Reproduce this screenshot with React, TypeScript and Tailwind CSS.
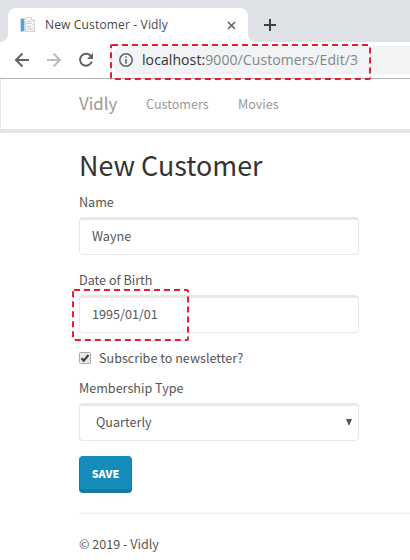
import React from "react";

function DashedFrame({ className, w, h }: { className: string; w: number; h: number }) {
  return (
    <svg className={"absolute pointer-events-none " + className} width={w} height={h}>
      <rect x="1" y="1" width={w - 2} height={h - 2} rx="1" fill="none" stroke="#eb1c2b" strokeWidth="2" strokeDasharray="6 4" />
    </svg>
  );
}

function PageIcon() {
  return (
    <svg width="16" height="16" viewBox="0 0 16 16">
      <path d="M5.5.5h6l3 3v8h-9z" fill="#f6f6f6" stroke="#dcdcdc" />
      <path d="M11.5.5v3h3" fill="#fff" stroke="#cfcfcf" />
      <rect x="0" y="1" width="5" height="14" fill="#c3ddee" />
      <rect x="1" y="2" width="3" height="12" fill="#56a0d3" />
      <path d="M5.500 6.500h6l3 2.500v5.500h-9z" fill="#f5f6f7" stroke="#cfd3d8" />
      <path d="M7 4.500h4M7 9.500h4M7 12h6" stroke="#c3c8cc" />
    </svg>
  );
}

function BrowserBar() {
  return (
    <header>
      <div className="flex h-[42px] bg-[#dee1e6] pt-2">
        <div className="flex w-2 items-end bg-white"><div className="h-full w-2 rounded-br-lg bg-[#dee1e6]" /></div>
        <div className="flex w-[240px] items-center rounded-t-lg bg-white pl-3 pr-3">
          <PageIcon />
          <span className="ml-[9px] flex-1 whitespace-nowrap font-['Open_Sans',sans-serif] text-[12px] leading-4 tracking-[0.16px] text-[#45484c]">New Customer - Vidly</span>
          <svg width="9" height="9" viewBox="0 0 9 9"><path d="M1 1l7 7M8 1l-7 7" stroke="#5f6368" strokeWidth="1.6" /></svg>
        </div>
        <div className="w-2 bg-white"><div className="h-full w-2 rounded-bl-lg bg-[#dee1e6]" /></div>
        <svg className="ml-2 mt-[11px]" width="12" height="12"><path d="M6 0v12M0 6h12" stroke="#3c4043" strokeWidth="2" /></svg>
      </div>
      <div className="flex h-[37px] items-center border-b border-[#b0b1b3] bg-white pl-[14px]">
        <svg width="16" height="16" viewBox="0 0 16 16" fill="none" stroke="#5f6368" strokeWidth="2"><path d="M15 8H2.500M8.500 1.500L2 8l6.500 6.500" /></svg>
        <svg className="ml-4" width="16" height="16" viewBox="0 0 16 16" fill="none" stroke="#babcbe" strokeWidth="2"><path d="M1 8h12.500M7.500 1.500L14 8l-6.500 6.500" /></svg>
        <svg className="ml-4" width="16" height="16" viewBox="0 0 16 16" fill="none"><path d="M13 4.200A6 6 0 1 0 13.800 9.500" stroke="#5f6368" strokeWidth="2" /><path d="M15 1v6H9z" fill="#5f6368" /></svg>
        <div className="ml-[17px] flex h-7 flex-1 items-center rounded-l-full bg-[#f1f3f4] pl-2">
          <svg width="14" height="14" viewBox="0 0 14 14" fill="none" stroke="#5f6368"><circle cx="7" cy="7" r="6.200" strokeWidth="1.500" /><path d="M7 3.300v1.500M7 6v4.700" strokeWidth="1.600" /></svg>
          <span className="ml-[9px] whitespace-nowrap font-['Open_Sans',sans-serif] text-[14px] leading-5 tracking-[0.09px] text-[#80868b]"><span className="text-[#303236]">localhost:</span>9000/Customers/Edit/3</span>
        </div>
      </div>
    </header>
  );
}

function Field({ label, value, className }: { label: string; value: string; className: string }) {
  return (
    <div className={className}>
      <div className="h-5 leading-5">{label}</div>
      <div className="mt-[5px] flex h-[38px] w-[280px] items-center rounded border border-t-[3px] border-[#e7e7e7] pb-0.5 pl-3">{value}</div>
    </div>
  );
}

export default function App() {
  return (
    <div className="relative h-[560px] w-[410px] overflow-hidden bg-white font-['Noto_Sans_CJK_SC',sans-serif] text-[12.6px] text-[#555]">
      <BrowserBar />
      <nav className="flex h-[54px] items-center border-b-4 border-l border-[#e5e5e5] pl-[78px] text-[#999]">
        <span className="w-[67px] text-[16.8px]">Vidly</span>
        <span className="w-[92px]">Customers</span>
        <span>Movies</span>
      </nav>
      <main className="pl-[79px]">
        <h1 className="h-[51px] pt-[14px] text-[26.9px] leading-9 text-[#333]">New Customer</h1>
        <Field className="mt-2" label="Name" value="Wayne" />
        <Field className="mt-[15px]" label="Date of Birth" value="1995/01/01" />
        <div className="mt-[15px] flex h-5 items-center">
          <svg width="12" height="12" viewBox="0 0 12 12"><rect x=".5" y=".5" width="11" height="11" rx="1" fill="#e9e9e9" stroke="#aaa" /><path d="M2.500 6.300l2.300 2.400L9.500 3" fill="none" stroke="#404040" strokeWidth="2.200" /></svg>
          <span className="ml-2">Subscribe to newsletter?</span>
        </div>
        <div className="mt-[10px] h-5 leading-5">Membership Type</div>
        <div className="mt-[5px] flex h-[38px] w-[280px] items-center justify-between rounded border border-t-[3px] border-[#e7e7e7] pb-0.5 pl-4 pr-[6px]">
          <span>Quarterly</span>
          <svg width="6" height="6"><path d="M0 0h6L3.500 6h-1z" fill="#555" /></svg>
        </div>
        <button className="mt-[15px] flex h-[37px] w-[53px] items-center justify-center rounded border border-b-4 border-[#127ba3] border-t-[#158cba] bg-[#158cba] text-[10.8px] font-black text-white">SAVE</button>
        <div className="mt-5 border-t border-[#eee] pt-5 leading-5">© 2019 - Vidly</div>
      </main>
      <DashedFrame className="left-[110px] top-[44px]" w={261} h={36} />
      <DashedFrame className="left-[72px] top-[289px]" w={117} h={52} />
    </div>
  );
}
